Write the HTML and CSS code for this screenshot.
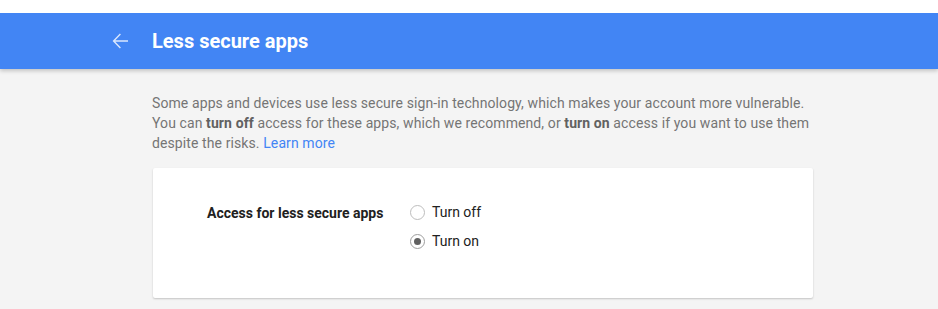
FILE: index.html
```html
<!DOCTYPE html>
<html lang="en">
<head>
<meta charset="UTF-8">
<meta name="viewport" content="width=device-width, initial-scale=1.0">
<title>Less secure apps</title>
<link rel="stylesheet" href="styles.css">
</head>
<body>
<div class="topbar">
    <a class="back" href="#">
        <svg width="24" height="24" viewBox="0 0 24 24"><path d="M20 11.2H7.3l5.6-5.6-1-1L4.6 12l7.3 7.4 1-1-5.6-5.6H20z" fill="#ffffff" fill-opacity="0.8"/></svg>
    </a>
    <h1>Less secure apps</h1>
</div>

<div class="content">
    <p class="intro">
        Some apps and devices use less secure sign-in technology, which makes your account more vulnerable.
        You can <b>turn off</b> access for these apps, which we recommend, or <b>turn on</b> access if you want to use them
        despite the risks. <a href="#">Learn more</a>
    </p>

    <div class="card">
        <div class="setting">
            <div class="label">Access for less secure apps</div>
            <div class="options">
                <label class="option"><span class="radio"></span>Turn off</label>
                <label class="option"><span class="radio checked"></span>Turn on</label>
            </div>
        </div>
    </div>
</div>
</body>
</html>
```

FILE: styles.css
```css
* {
    box-sizing: border-box;
    margin: 0;
    padding: 0;
}

body {
    background-color: #f4f4f4;
    font-family: Roboto, 'Liberation Sans', sans-serif;
    border-top: 13px solid #ffffff;
    min-height: 100vh;
}

.topbar {
    height: 56px;
    background-color: #4285f4;
    display: flex;
    align-items: center;
    padding-left: 108px;
    box-shadow: 0 2px 4px rgba(0, 0, 0, 0.2);
}

.back {
    display: flex;
    width: 24px;
    height: 24px;
    margin-right: 20px;
}

h1 {
    font-size: 20px;
    font-weight: 700;
    color: #ffffff;
    padding-bottom: 1px;
}

.content {
    width: 661px;
    margin-left: 152px;
    padding-top: 24px;
}

.intro {
    font-size: 14px;
    line-height: 20px;
    letter-spacing: 0.1px;
    color: #757575;
}

.intro b {
    font-weight: 700;
    color: #616161;
}

.intro a {
    color: #4285f4;
    text-decoration: none;
}

.card {
    margin-top: 15px;
    margin-left: 1px;
    background: #ffffff;
    border-radius: 2px;
    box-shadow: 0 1px 2px rgba(0, 0, 0, 0.2);
    padding: 32px 54px 45px;
}

.setting {
    display: flex;
}

.label {
    width: 203px;
    font-size: 14px;
    font-weight: 700;
    color: #212121;
    line-height: 24px;
    padding-top: 1px;
}

.options {
    display: flex;
    flex-direction: column;
    gap: 5px;
}

.option {
    display: flex;
    align-items: center;
    height: 24px;
    font-size: 14px;
    color: #212121;
}

.radio {
    width: 15px;
    height: 15px;
    border: 1px solid #bdbdbd;
    border-radius: 50%;
    margin-right: 7px;
    display: flex;
    align-items: center;
    justify-content: center;
}

.radio.checked {
    border-color: #9e9e9e;
}

.radio.checked::after {
    content: '';
    width: 7px;
    height: 7px;
    border-radius: 50%;
    background: #616161;
}
```
